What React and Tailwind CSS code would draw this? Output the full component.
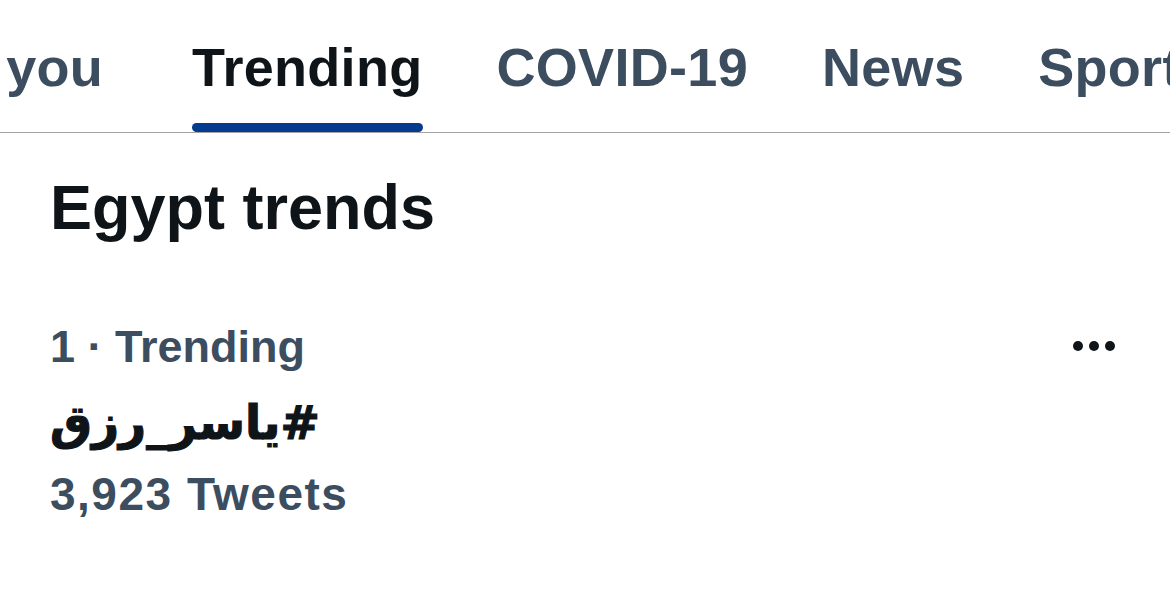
import React from "react";

const tabs = [
  { label: "For you", active: false },
  { label: "Trending", active: true },
  { label: "COVID-19", active: false },
  { label: "News", active: false },
  { label: "Sports", active: false },
];

const App = () => {
  return (
    <div
      className="w-[1170px] h-[597px] bg-white overflow-hidden"
      style={{ fontFamily: '"Liberation Sans", Arial, sans-serif' }}
    >
      {/* tab bar */}
      <div className="h-[133px] border-b-[1.5px] border-[#a3a3a3] overflow-hidden">
        <div className="flex h-full ml-[-97px] gap-[74px] whitespace-nowrap">
          {tabs.map((t, i) => (
            <div
              key={t.label}
              className={`relative flex flex-col h-full ${i === 0 ? "mr-[15px]" : ""}`}
            >
              <div
                className={`pt-[37px] text-[54px] leading-[60px] font-bold tracking-[0.3px] ${
                  t.active ? "text-[#0f1419]" : "text-[#3b4d5f]"
                }`}
              >
                {t.label}
              </div>
              {t.active && (
                <div className="mt-auto h-[9px] rounded-full bg-[#043b8e]" />
              )}
            </div>
          ))}
        </div>
      </div>

      <div className="px-[50px]">
        <h2 className="pt-[38px] text-[63px] leading-[72px] font-bold text-[#0f1419]">
          Egypt trends
        </h2>

        <div className="flex mt-[78px]">
          <div className="flex-1">
            <div className="text-[45px] leading-[52px] font-bold text-[#3b4d5f]">
              1 · Trending
            </div>
            <div className="mt-[22px] text-[47px] leading-[56px] font-bold text-[#0f1419]">
              <span
                dir="rtl"
                className="inline-block [-webkit-text-stroke:1.2px_#0f1419]"
                style={{ fontFamily: '"DejaVu Sans", sans-serif' }}
              >
                #ياسر_رزق
              </span>
            </div>
            <div className="mt-[17px] text-[46px] leading-[52px] tracking-[1.5px] font-semibold text-[#3b4d5f]">
              3,923 Tweets
            </div>
          </div>
          <div className="flex gap-[6px] pt-[20px] pr-[5px]">
            <span className="w-[10px] h-[10px] rounded-full bg-[#0f1419]" />
            <span className="w-[10px] h-[10px] rounded-full bg-[#0f1419]" />
            <span className="w-[10px] h-[10px] rounded-full bg-[#0f1419]" />
          </div>
        </div>
      </div>
    </div>
  );
};

export default App;
